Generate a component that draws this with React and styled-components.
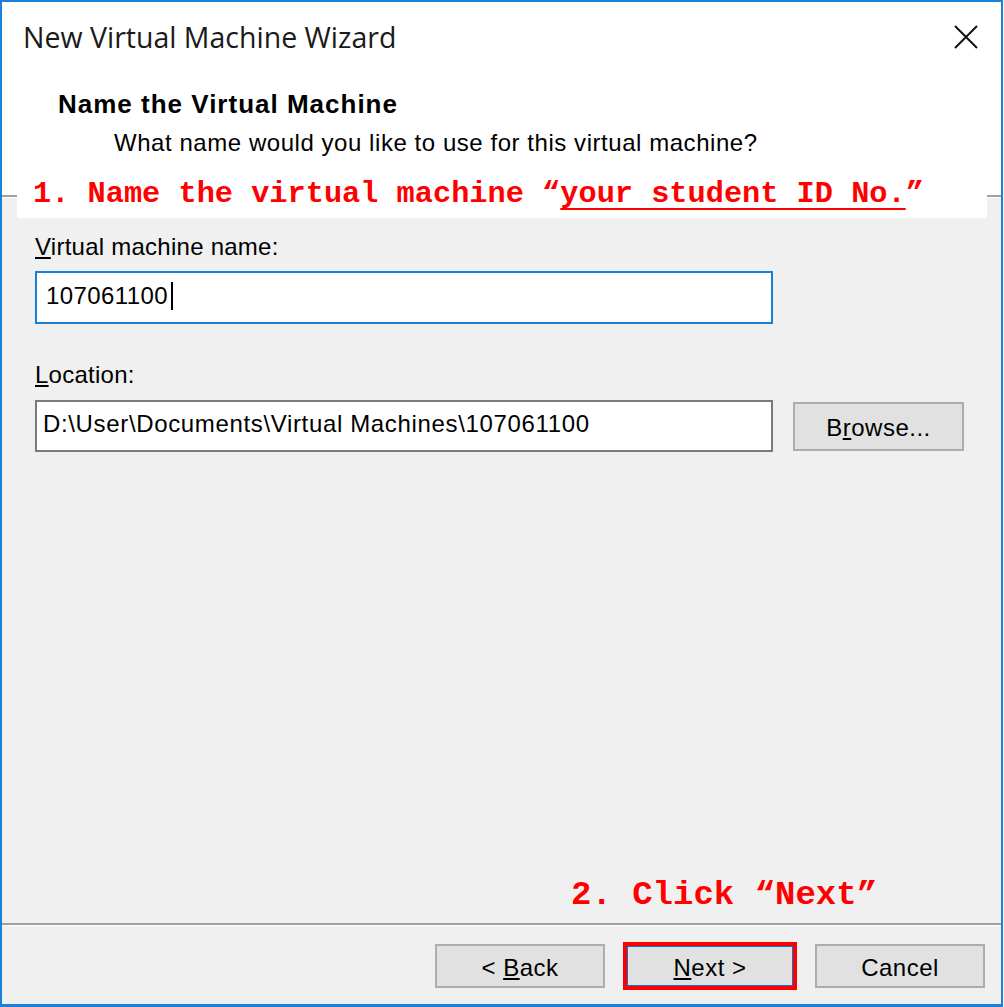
import React from "react";
import styled, { createGlobalStyle } from "styled-components";

const Global = createGlobalStyle`
  html, body { margin: 0; padding: 0; background: #ffffff; }
  body { width: 1004px; height: 1007px; overflow: hidden; }
  * { box-sizing: border-box; }
`;

const Window = styled.div`
  position: relative;
  width: 1003px;
  height: 1007px;
  border: 2px solid #1a80d8;
  border-bottom-width: 3px;
  background: #f0f0f0;
  display: flex;
  flex-direction: column;
  font-family: "Liberation Sans", Arial, sans-serif;
  color: #000;
`;

const Header = styled.div`
  background: #ffffff;
  height: 193px;
  display: flex;
  flex-direction: column;
  flex: none;
`;

const TitleBar = styled.div`
  height: 70px;
  display: flex;
  align-items: center;
  justify-content: space-between;
  padding: 0 22px 0 21px;
`;

const Title = styled.div`
  font-family: "Open Sans", "Noto Sans", sans-serif;
  font-size: 28.5px;
  letter-spacing: 0;
  color: #1a1a1a;
  line-height: 1;
`;

const Close = styled.svg`
  width: 26px;
  height: 26px;
`;

const Heading = styled.div`
  margin: 17px 0 0 56px;
  font-weight: bold;
  font-size: 26px;
  letter-spacing: 1px;
  line-height: 30px;
`;

const Subtitle = styled.div`
  margin: 9px 0 0 112px;
  font-size: 24px;
  letter-spacing: 0.55px;
  line-height: 30px;
`;

const Separator = styled.div`
  flex: none;
  height: 3px;
  border-top: 2px solid #a0a0a0;
  border-bottom: 1px solid #ffffff;
  background: #a0a0a0;
`;

const Callout = styled.div`
  position: absolute;
  left: 15px;
  top: 168px;
  width: 970px;
  height: 48px;
  background: #ffffff;
  padding-left: 16px;
  display: flex;
  align-items: center;
`;

const Note = styled.div`
  font-family: "Liberation Mono", "DejaVu Sans Mono", monospace;
  font-weight: bold;
  color: #ff0000;
  font-size: ${(p) => p.size}px;
  line-height: 1;
  white-space: pre;
  u {
    text-decoration-thickness: 2px;
    text-underline-offset: 6px;
  }
`;

const Body = styled.div`
  flex: 1;
  display: flex;
  flex-direction: column;
  padding: 34px 0 0 33px;
`;

const Label = styled.div`
  font-size: 24px;
  letter-spacing: 0.25px;
  line-height: 30px;
  color: #000;
  margin-top: ${(p) => p.top || 0}px;
  margin-bottom: ${(p) => p.gap}px;
`;

const Row = styled.div`
  display: flex;
  align-items: center;
  gap: 20px;
`;

const Field = styled.div`
  flex: none;
  width: 738px;
  height: ${(p) => (p.focused ? 53 : 52)}px;
  background: #ffffff;
  border: 2px solid ${(p) => (p.focused ? "#1a7fd6" : "#7a7a7a")};
  display: flex;
  align-items: center;
  padding-left: ${(p) => (p.focused ? 9 : 6)}px;
  font-size: 24px;
  letter-spacing: ${(p) => (p.focused ? 0.4 : 0.65)}px;
  padding-bottom: 4px;
`;

const Caret = styled.span`
  display: inline-block;
  width: 2px;
  height: 28px;
  background: #000;
  margin-left: 3px;
`;

const Button = styled.div`
  flex: none;
  width: ${(p) => p.w || 170}px;
  height: ${(p) => p.h || 44}px;
  background: #e1e1e1;
  border: 2px solid #adadad;
  display: flex;
  align-items: center;
  justify-content: center;
  font-size: 24px;
  letter-spacing: 0.5px;
  color: #000;
  padding-top: 3px;
  white-space: pre;
  ${(p) =>
    p.highlighted &&
    `
    border-color: #0078d7;
    outline: 4px solid #ff0000;
    outline-offset: -2px;
    box-shadow: inset 0 0 0 1px #0078d7;
  `}
`;

const Spacer = styled.div`
  flex: 1;
`;

const NextNote = styled.div`
  margin: 0 0 11px 536px;
`;

const Footer = styled.div`
  flex: none;
  height: 81px;
  border-top: 2px solid #a0a0a0;
  box-shadow: inset 0 1px 0 #ffffff;
  display: flex;
  justify-content: flex-end;
  align-items: flex-start;
  gap: 20px;
  padding: 19px 16px 0 0;
`;

export default function App() {
  return (
    <>
      <Global />
      <Window>
        <Header>
          <TitleBar>
            <Title>New Virtual Machine Wizard</Title>
            <Close viewBox="0 0 26 26">
              <path d="M2 2 L24 24 M24 2 L2 24" stroke="#111" strokeWidth="2" fill="none" />
            </Close>
          </TitleBar>
          <Heading>Name the Virtual Machine</Heading>
          <Subtitle>What name would you like to use for this virtual machine?</Subtitle>
        </Header>
        <Separator />
        <Callout>
          <Note size={30.3}>
            {"1. Name the virtual machine “"}
            <u>your student ID No.</u>
            {"”"}
          </Note>
        </Callout>
        <Body>
          <Label gap={9}>
            <u>V</u>irtual machine name:
          </Label>
          <Field focused>
            107061100
            <Caret />
          </Field>
          <Label top={36} gap={10}>
            <u>L</u>ocation:
          </Label>
          <Row>
            <Field>D:\User\Documents\Virtual Machines\107061100</Field>
            <Button w={171} h={49}>
              B<u>r</u>owse...
            </Button>
          </Row>
          <Spacer />
          <NextNote>
            <Note size={34}>{"2. Click “Next”"}</Note>
          </NextNote>
        </Body>
        <Footer>
          <Button>
            {"< "}
            <u>B</u>
            {"ack"}
          </Button>
          <Button highlighted>
            <u>N</u>
            {"ext >"}
          </Button>
          <Button>Cancel</Button>
        </Footer>
      </Window>
    </>
  );
}
